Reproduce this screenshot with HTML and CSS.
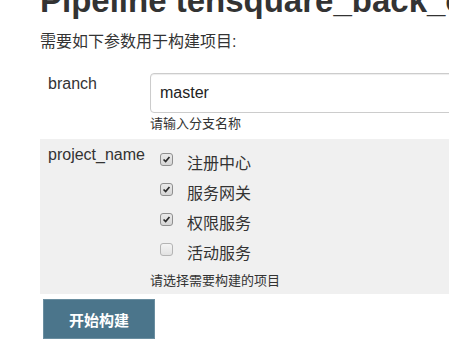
FILE: index.html
```html
<!DOCTYPE html>
<html>
<head>
    <meta charset="utf-8">
    <title>Pipeline tensquare_back_cloud</title>
    <link rel="stylesheet" href="styles.css">
</head>
<body>
    <div class="main">
        <h1>Pipeline tensquare_back_cloud</h1>
        <p class="desc">需要如下参数用于构建项目:</p>

        <form class="params">
            <div class="param">
                <div class="param-name">branch</div>
                <div class="param-value">
                    <input type="text" class="text-input" value="master">
                    <div class="help">请输入分支名称</div>
                </div>
            </div>

            <div class="param param-alt">
                <div class="param-name">project_name</div>
                <div class="param-value">
                    <div class="checks">
                        <label class="check"><span class="box checked"><svg viewBox="0 0 13 13"><path d="M3 6.5 L5.5 9 L10 3.5" /></svg></span>注册中心</label>
                        <label class="check"><span class="box checked"><svg viewBox="0 0 13 13"><path d="M3 6.5 L5.5 9 L10 3.5" /></svg></span>服务网关</label>
                        <label class="check"><span class="box checked"><svg viewBox="0 0 13 13"><path d="M3 6.5 L5.5 9 L10 3.5" /></svg></span>权限服务</label>
                        <label class="check"><span class="box"></span>活动服务</label>
                    </div>
                    <div class="help help-list">请选择需要构建的项目</div>
                </div>
            </div>

            <button type="button" class="build-btn">开始构建</button>
        </form>
    </div>
</body>
</html>
```

FILE: styles.css
```css
body {
    margin: 0;
    font-family: "Liberation Sans", Arial, "Noto Sans CJK SC", sans-serif;
    color: #333;
    background: #fff;
    overflow: hidden;
}
.main {
    padding-left: 40px;
}
h1 {
    margin: -19px 0 0;
    font-size: 33px;
    line-height: 40px;
    font-weight: bold;
    white-space: nowrap;
    color: #333;
}
.desc {
    margin: 9px 0 0;
    font-size: 16px;
    line-height: 24px;
}
.params {
    margin-top: 11px;
}
.param {
    display: grid;
    grid-template-columns: 110px 1fr;
    padding: 8px 0 6px;
}
.param-name {
    padding-left: 8px;
    padding-top: 1px;
    font-size: 16px;
    line-height: 20px;
}
.text-input {
    display: block;
    box-sizing: border-box;
    width: 320px;
    height: 40px;
    padding: 0 9px;
    border: 1px solid #ccc;
    border-radius: 4px;
    box-shadow: inset 0 1px 1px rgba(0,0,0,0.075);
    font-family: inherit;
    font-size: 16px;
    color: #222;
}
.help {
    margin-top: 2px;
    font-size: 13px;
    line-height: 18px;
    color: #333;
}
.param-alt {
    background: #f0f0f0;
    padding: 5px 0 4px;
}
.checks {
    margin-top: 3px;
    padding-left: 10px;
}
.check {
    display: flex;
    align-items: center;
    height: 30px;
    font-size: 16px;
}
.box {
    box-sizing: border-box;
    width: 13px;
    height: 13px;
    margin-right: 14px;
    margin-bottom: 5px;
    border: 1px solid #b4b4b4;
    border-radius: 3px;
    background: linear-gradient(#f4f4f4, #e2e2e2);
    display: flex;
}
.box.checked {
    border-color: #8f8f8f;
    background: linear-gradient(#eaeaea, #d6d6d6);
}
.box svg {
    width: 11px;
    height: 11px;
}
.box path {
    fill: none;
    stroke: #2b2b2b;
    stroke-width: 2;
}
.help-list {
    margin-top: 5px;
}
.build-btn {
    display: block;
    margin: 5px 0 0 3px;
    width: 112px;
    height: 40px;
    background: #4b758b;
    border: 1px solid #6a8ea0;
    color: #fff;
    font-family: inherit;
    font-size: 15px;
    font-weight: bold;
    cursor: pointer;
}
```
